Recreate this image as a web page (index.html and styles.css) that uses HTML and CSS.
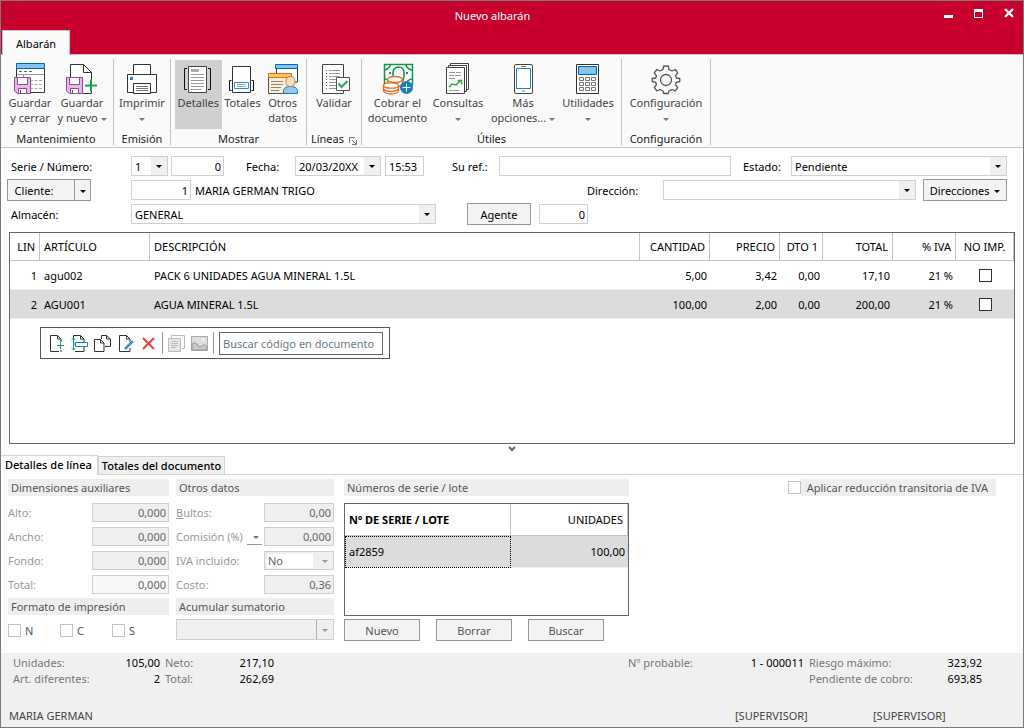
FILE: index.html
```html
<!DOCTYPE html>
<html lang="es">
<head>
<meta charset="utf-8">
<title>Nuevo albarán</title>
<link rel="stylesheet" href="styles.css">
</head>
<body>
<div class="window">
  <header class="titlebar">
    <div class="caption">
      <h1 class="caption-title">Nuevo albarán</h1>
      <div class="caption-buttons">
        <button type="button" aria-label="Minimizar"><svg width="10" height="10" viewBox="0 0 10 10"><path d="M0 7h9v3H0z" fill="#fff"/></svg></button>
        <button type="button" aria-label="Maximizar"><svg width="10" height="10" viewBox="0 0 10 10"><path d="M0 1h9v9H0zM1 4v5h7V4z" fill="#fff" fill-rule="evenodd"/></svg></button>
        <button type="button" aria-label="Cerrar"><svg width="10" height="10" viewBox="0 0 10 10"><path d="M1 1l8 8M9 1L1 9" stroke="#fff" stroke-width="2.4"/></svg></button>
      </div>
    </div>
    <button type="button" class="ribbon-tab">Albarán</button>
  </header>

  <nav class="ribbon">
    <section class="group group-save">
      <div class="group-buttons">
        <button type="button" class="tool">
          <svg width="32" height="32" viewBox="0 0 32 32" fill="none">
            <path d="M2.500 5.500V29.500H30.500V5.500" fill="#fff" stroke="#333"/>
            <path d="M2.500.500h28v5h-28z" fill="#83c3ef" stroke="#0067b0"/>
            <path d="M5 8.500h3m2 0h3m2 0h3" stroke="#666"/>
            <path d="M3 11.500h27M9.500 12v4" stroke="#999"/>
            <path d="M16 17.500h12M16 21.500h12M16 25.500h12" stroke="#aaa" stroke-dasharray="3 1.500"/>
            <path d="M.500 14.500h16v16H3.500L.500 28z" fill="#e2b9df" stroke="#95479b"/>
            <path d="M3.500 14.500h10v7h-10z" fill="#fff" stroke="#95479b"/>
            <path d="M4.500 25.500h8v5h-8z" fill="#fff" stroke="#95479b"/><path d="M6.500 27v3" stroke="#555"/>
          </svg>
          <span>Guardar<br>y cerrar</span>
        </button>
        <button type="button" class="tool">
          <svg width="32" height="32" viewBox="0 0 32 32" fill="none">
            <path d="M4.500 14V1.500H17.500L25.500 9.500V18M17 30.500h8.500V28" fill="#fff" stroke="#333"/>
            <path d="M17.500 1.500v8h8" stroke="#333"/>
            <path d="M19 22.500h12M25 16.500v12" stroke="#11a94e" stroke-width="2"/>
            <path d="M.500 14.500h16v16H3.500L.500 28z" fill="#e2b9df" stroke="#95479b"/>
            <path d="M3.500 14.500h10v7h-10z" fill="#fff" stroke="#95479b"/>
            <path d="M4.500 25.500h8v5h-8z" fill="#fff" stroke="#95479b"/><path d="M6.500 27v3" stroke="#555"/>
          </svg>
          <span>Guardar<br>y nuevo <i class="arrow"></i></span>
        </button>
      </div>
      <h2>Mantenimiento</h2>
    </section>
    <section class="group group-print">
      <div class="group-buttons">
        <button type="button" class="tool">
          <svg width="32" height="32" viewBox="0 0 32 32" fill="none" stroke="#333">
            <path d="M7.500 1.500h17v10h-17z" fill="#fff"/>
            <path d="M1.500 11.500h29v19h-29z" fill="#fff" stroke="none"/>
            <path d="M7 29.500H1.500V11.500h29v18H25" fill="#fff"/>
            <path d="M7.500 20.500h17v10h-17z" fill="#fff"/>
            <path d="M4 14h3v3H4z" fill="#1e86d0" stroke="none"/>
            <path d="M10 23.500h12M10 25.500h12M10 27.500h12" stroke="#777"/>
          </svg>
          <span>Imprimir<br><i class="arrow"></i></span>
        </button>
      </div>
      <h2>Emisión</h2>
    </section>
    <section class="group group-show">
      <div class="group-buttons">
        <button type="button" class="tool tool-details" aria-pressed="true">
          <svg width="32" height="32" viewBox="0 0 32 32" fill="none">
            <path d="M6.500 3.500h18v26h-18z" fill="#fff" stroke="#444"/>
            <path d="M9 6h8v3H9z" fill="#aaa"/>
            <path d="M9 11.500h13M9 14.500h13M9 17.500h13M9 20.500h13M9 23.500h13M9 26.500h10" stroke="#999"/>
            <path d="M5 5.500H2.500v21H5M26 5.500h2.500v21H26" stroke="#111"/>
          </svg>
          <span>Detalles</span>
        </button>
        <button type="button" class="tool tool-totals">
          <svg width="32" height="32" viewBox="0 0 32 32" fill="none">
            <path d="M6.500 3.500h18v26h-18z" fill="#fff" stroke="#333"/>
            <path d="M8.500 19.500h14v6h-14z" fill="#fff" stroke="#0f98d6"/>
            <path d="M11 21.500h9M11 23.500h9" stroke="#aaa"/>
            <path d="M5.500 17.500H3.500v10h2M25.500 17.500h2v10h-2" stroke="#111"/>
          </svg>
          <span>Totales</span>
        </button>
        <button type="button" class="tool tool-other">
          <svg width="32" height="32" viewBox="0 0 32 32" fill="none">
            <path d="M9.500 5v14h21V5" fill="#fff" stroke="#333"/>
            <path d="M8.500 1.500h22v4h-22z" fill="#83c3ef" stroke="#0067b0"/>
            <path d="M1.500 13h22v17.500h-22z" fill="#fbeed8" stroke="#555"/>
            <path d="M1.500 10.500h23v4h-23z" fill="#ffc65a" stroke="#e26d22"/>
            <path d="M4 18.500h12M4 21.500h12M4 24.500h10M4 27.500h8" stroke="#888"/>
            <path d="M16.500 30.500v-3q1-4 7-4t7 4v3z" fill="#94caec" stroke="#1677bd"/>
            <path d="M23.500 13.500q4.500 0 4.500 5t-4.500 5-4.500-5 4.500-5z" fill="#f7dfc8" stroke="#c97e4b"/>
          </svg>
          <span>Otros<br>datos</span>
        </button>
      </div>
      <h2>Mostrar</h2>
    </section>
    <section class="group group-lines">
      <div class="group-buttons">
        <button type="button" class="tool">
          <svg width="32" height="32" viewBox="0 0 32 32" fill="none">
            <path d="M4.500 1.500h21v29h-21z" fill="#fff" stroke="#444"/>
            <path d="M11 7.500h11M11 10.500h11M11 13.500h11M11 16.500h8M11 19.500h8M11 22.500h7M11 25.500h7" stroke="#999"/>
            <path d="M8.500 7v1m0 5v1m0 8v1m0 2v1" stroke="#15a349"/>
            <path d="M8.500 10v1m0 5v1m0 2v1" stroke="#c8002d"/>
            <path d="M18.500 14.500h13v13h-13z" fill="#fff" stroke="#555"/>
            <path d="M20.500 20.500l3 3.500 6-6" stroke="#23a551" stroke-width="2"/>
          </svg>
          <span>Validar</span>
        </button>
      </div>
      <h2>Líneas<button type="button" class="launcher" aria-label="Opciones de líneas"><svg width="8" height="8" viewBox="0 0 8 8" fill="none" stroke="#777"><path d="M.500 6V.500H6M3 3l4 4M7.500 3v4.500H3"/></svg></button></h2>
    </section>
    <section class="group group-useful">
      <div class="group-buttons">
        <button type="button" class="tool tool-charge">
          <svg width="32" height="32" viewBox="0 0 32 32" fill="none">
            <path d="M2.500 1.500h28v20h-28z" fill="#fff" stroke="#119447" stroke-width="1.500"/>
            <path d="M2.500 7q5-1 6-5M24 2q1 4 6 5M24 21q1-4 6-5M2.500 16q4 0 5 3" stroke="#119447" stroke-width="1.500"/>
            <path d="M12 18q0-3-1-5-1-9 5.500-9t5.500 9l-1 5" stroke="#119447" stroke-width="1.500"/>
            <path d="M7 9h2v2H7zm17 0h2v2h-2z" fill="#119447"/>
            <path d="M5.500 16v4q2 4 8 4t7-4v-4" fill="#fff8ef" stroke="#e26d22" stroke-width="1.300"/>
            <ellipse cx="13" cy="16.500" rx="7.500" ry="3" fill="#fff" stroke="#e26d22" stroke-width="1.300"/>
            <path d="M1.500 22v6q2 3 7.500 3t7.500-3v-6" fill="#fff" stroke="#e26d22" stroke-width="1.300"/>
            <ellipse cx="9" cy="22.500" rx="7.500" ry="2.700" fill="#fff" stroke="#e26d22" stroke-width="1.300"/>
            <path d="M1.500 26q2 2.500 7.500 2.500t7.500-2.500" stroke="#e26d22" stroke-width="1.300"/>
            <circle cx="24.500" cy="24.500" r="6.500" fill="#147fc3"/><path d="M20.500 24.500h8M24.500 20.500v8" stroke="#fff"/>
          </svg>
          <span>Cobrar el<br>documento</span>
        </button>
        <button type="button" class="tool tool-query">
          <svg width="32" height="32" viewBox="0 0 32 32" fill="none">
            <path d="M8.500.500h18v26h-18z" fill="#fff" stroke="#444"/>
            <path d="M6.500 2.500h18v26h-18z" fill="#fff" stroke="#444"/>
            <path d="M4.500 4.500h18v26h-18z" fill="#fff" stroke="#444"/>
            <path d="M7 9.500h6m1 0h5M7 12.500h5m1 0h6M7 15.500h6M7 27.500h10" stroke="#999"/>
            <path d="M7 24l3-3 4 1 5-5M15.500 17.500h4v4" stroke="#35a52d" stroke-width="1.500"/>
          </svg>
          <span>Consultas<br><i class="arrow"></i></span>
        </button>
        <button type="button" class="tool tool-more">
          <svg width="32" height="32" viewBox="0 0 32 32" fill="none">
            <rect x="7.500" y="1.500" width="18" height="29" rx="1.500" fill="#fff" stroke="#444"/>
            <path d="M9.500 5.500h14v20h-14z" fill="#fff" stroke="#1c83c6"/>
            <path d="M14 3.500h5M15 28h3" stroke="#777"/>
          </svg>
          <span>Más<br>opciones... <i class="arrow"></i></span>
        </button>
        <button type="button" class="tool tool-utils">
          <svg width="32" height="32" viewBox="0 0 32 32" fill="none">
            <path d="M4.500 1.500h22v29h-22z" fill="#fff" stroke="#333"/>
            <path d="M6.500 3.500h18v8h-18z" fill="#83c3ef" stroke="#0067b0"/>
            <path d="M7.500 14.500h4v3h-4zm6 0h4v3h-4zm6 0h4v3h-4zM7.500 19.500h4v3h-4zm6 0h4v3h-4zm6 0h4v3h-4zM7.500 24.500h4v3h-4zm6 0h4v3h-4zm6 0h4v3h-4z" stroke="#777"/>
          </svg>
          <span>Utilidades<br><i class="arrow"></i></span>
        </button>
      </div>
      <h2>Útiles</h2>
    </section>
    <section class="group group-config">
      <div class="group-buttons">
        <button type="button" class="tool">
          <svg width="32" height="32" viewBox="0 0 32 32" fill="none" stroke="#555" stroke-width="1.300" stroke-linejoin="round">
            <path d="M13 6.500l.8-3.500h4.400l.8 3.500 3 1.500 3.200-1.500 2.500 3.300-2.200 3 .8 2.200 3.500.5v3l-3.500.8-.8 2.400 2.200 3-2.500 3.200-3.200-1.400-3 1.500-.8 2.500h-4.400l-.8-2.500-3-1.500-3.200 1.400-2.500-3.200 2.200-3-.8-2.400-3.500-.8v-3l3.500-.5.8-2.200-2.200-3L6.800 6.500 10 8z"/>
            <circle cx="16" cy="17" r="5.500"/>
          </svg>
          <span>Configuración<br><i class="arrow"></i></span>
        </button>
      </div>
      <h2>Configuración</h2>
    </section>
  </nav>

  <main class="content">
    <form class="head-form">
      <div class="form-row">
        <label class="lead" for="serie">Serie / Número:</label>
        <span class="combo w-serie"><select id="serie"><option>1</option></select></span>
        <input class="num w-number" type="text" value="0" aria-label="Número">
        <label class="w-date-label" for="fecha">Fecha:</label>
        <span class="combo w-date"><select id="fecha"><option>20/03/20XX</option></select></span>
        <input class="w-time" type="text" value="15:53" aria-label="Hora">
        <label class="w-ref-label" for="ref">Su ref.:</label>
        <input class="grow" id="ref" type="text">
        <label class="w-state-label" for="estado">Estado:</label>
        <span class="combo w-state"><select id="estado"><option>Pendiente</option></select></span>
      </div>
      <div class="form-row">
        <div class="lead">
          <span class="split"><button type="button" class="btn">Cliente:</button><button type="button" class="btn" aria-label="Más opciones de cliente"><i class="arrow dark"></i></button></span>
        </div>
        <input class="num w-client" type="text" value="1" aria-label="Código de cliente">
        <span class="client-name">MARIA GERMAN TRIGO</span>
        <label class="w-address-label" for="direccion">Dirección:</label>
        <span class="combo w-address"><select id="direccion"><option></option></select></span>
        <button type="button" class="btn w-addresses">Direcciones <i class="arrow dark"></i></button>
      </div>
      <div class="form-row">
        <label class="lead" for="almacen">Almacén:</label>
        <span class="combo w-store"><select id="almacen"><option>GENERAL</option></select></span>
        <button type="button" class="btn w-agent">Agente</button>
        <input class="num w-agent-code" type="text" value="0" aria-label="Código de agente">
      </div>
    </form>

    <section class="lines">
      <table class="grid">
        <colgroup><col class="c-lin"><col class="c-art"><col><col class="c-num"><col class="c-num"><col class="c-dto"><col class="c-num"><col class="c-iva"><col class="c-imp"></colgroup>
        <thead><tr><th class="r">LIN</th><th>ARTÍCULO</th><th>DESCRIPCIÓN</th><th class="r">CANTIDAD</th><th class="r">PRECIO</th><th class="r">DTO 1</th><th class="r">TOTAL</th><th class="r">% IVA</th><th class="c">NO IMP.</th></tr></thead>
        <tbody>
          <tr><td class="r">1</td><td>agu002</td><td>PACK 6 UNIDADES AGUA MINERAL 1.5L</td><td class="r">5,00</td><td class="r">3,42</td><td class="r">0,00</td><td class="r">17,10</td><td class="r">21 %</td><td class="c"><input type="checkbox" aria-label="No imprimir línea 1"></td></tr>
          <tr class="selected"><td class="r">2</td><td>AGU001</td><td>AGUA MINERAL 1.5L</td><td class="r">100,00</td><td class="r">2,00</td><td class="r">0,00</td><td class="r">200,00</td><td class="r">21 %</td><td class="c"><input type="checkbox" aria-label="No imprimir línea 2"></td></tr>
        </tbody>
      </table>
      <div class="line-tools">
        <button type="button" aria-label="Nueva línea"><svg width="17" height="17" viewBox="0 0 17 17" fill="none"><path d="M11 16.500H2.500V.500h7l3.500 3.500v3M9.500.500V4H13M13 15v2" stroke="#333"/><path d="M9 10.500h7M12.500 7v7" stroke="#11a94e"/></svg></button>
        <button type="button" aria-label="Insertar línea"><svg width="17" height="17" viewBox="0 0 17 17" fill="none"><path d="M2.500 6V.500h7l3.500 3.500v3M9.500.500V4H13M13 12v4.500H4" stroke="#333"/><path d="M4.500 7.500h12v4h-12z" stroke="#147fc3"/><path d="M2.500 3v12M.500 5l2-2 2 2M.500 13l2 2 2-2M2 9h2" stroke="#11a94e"/></svg></button>
        <button type="button" aria-label="Duplicar línea"><svg width="17" height="17" viewBox="0 0 17 17" fill="none" stroke="#333"><path d="M7.500 4V.500h5L16.500 4v7.500H11M12.500.500V4H16"/><path d="M.500 4.500h6l3.500 3.500v8.500H.500zM6.500 4.500V8H10" fill="#fff"/></svg></button>
        <button type="button" aria-label="Modificar línea"><svg width="17" height="17" viewBox="0 0 17 17" fill="none"><path d="M9 16.500H2.500V.500h7l3.500 3.500v3M9.500.500V4H13M13 13v3.500H9" stroke="#333"/><path d="M8 14l8-8" stroke="#3b94d2" stroke-width="2.500"/></svg></button>
        <button type="button" aria-label="Eliminar línea"><svg width="17" height="17" viewBox="0 0 17 17" fill="none"><path d="M3 3l11 11M14 3L3 14" stroke="#ea3e3e" stroke-width="2"/></svg></button>
        <span class="divider"></span>
        <button type="button" aria-label="Notas" disabled><svg width="17" height="17" viewBox="0 0 17 17" fill="none" stroke="#bbb"><path d="M3.500 3V.500h13v13H14"/><path d="M.500 3.500h12v13H.500z" fill="#e8e8e8"/><path d="M3 6.500h7M3 8.500h7M3 10.500h7M3 12.500h5"/></svg></button>
        <button type="button" aria-label="Imagen" disabled><svg width="17" height="17" viewBox="0 0 17 17"><path d="M.500 1.500h16v14H.500z" fill="#ddd" stroke="#aaa"/><path d="M1 9q3-3 5 0t3 3l3-2q2-1 4 2v3H1z" fill="#c8c8c8" stroke="#999"/><circle cx="12" cy="5" r="2" fill="#eee"/></svg></button>
        <span class="divider"></span>
        <input type="text" placeholder="Buscar código en documento" aria-label="Buscar código en documento">
      </div>
    </section>

    <button type="button" class="collapse" aria-label="Contraer"><svg width="8" height="6" viewBox="0 0 8 6" fill="none"><path d="M1 1l3 3 3-3" stroke="#666" stroke-width="2"/></svg></button>

    <div class="tabs" role="tablist">
      <button type="button" role="tab" aria-selected="true" class="tab active">Detalles de línea</button>
      <button type="button" role="tab" aria-selected="false" class="tab">Totales del documento</button>
    </div>

    <div class="panel">
      <div class="panel-left">
        <section>
          <h3>Dimensiones auxiliares</h3>
          <div class="fields">
            <label for="alto">Alto:</label><input class="num" id="alto" type="text" value="0,000" disabled>
            <label for="ancho">Ancho:</label><input class="num" id="ancho" type="text" value="0,000" disabled>
            <label for="fondo">Fondo:</label><input class="num" id="fondo" type="text" value="0,000" disabled>
            <label for="total">Total:</label><input class="num light" id="total" type="text" value="0,000" disabled>
          </div>
          <h3>Formato de impresión</h3>
          <div class="checks">
            <label><input type="checkbox" disabled>N</label>
            <label><input type="checkbox" disabled>C</label>
            <label><input type="checkbox" disabled>S</label>
          </div>
        </section>
        <section>
          <h3>Otros datos</h3>
          <div class="fields">
            <label for="bultos"><u>B</u>ultos:</label><input class="num" id="bultos" type="text" value="0,00" disabled>
            <div class="commission"><label for="comision">Comisión (%)</label><button type="button" disabled aria-label="Tipo de comisión"><i class="arrow"></i></button></div><input class="num" id="comision" type="text" value="0,000" disabled>
            <label for="iva">IVA incluido:</label><span class="combo off"><select id="iva" disabled><option>No</option></select></span>
            <label for="costo">Costo:</label><input class="num" id="costo" type="text" value="0,36" disabled>
          </div>
          <h3>Acumular sumatorio</h3>
          <span class="combo off sum"><select aria-label="Acumular sumatorio" disabled><option></option></select></span>
        </section>
      </div>
      <section class="serials">
        <h3>Números de serie / lote</h3>
        <div class="serial-box">
          <table class="grid">
            <colgroup><col class="c-serial"><col></colgroup>
            <thead><tr><th class="strong">Nº DE SERIE / LOTE</th><th class="r">UNIDADES</th></tr></thead>
            <tbody><tr class="selected"><td class="focused">af2859</td><td class="r">100,00</td></tr></tbody>
          </table>
        </div>
        <div class="serial-buttons">
          <button type="button" class="btn">Nuevo</button>
          <button type="button" class="btn">Borrar</button>
          <button type="button" class="btn">Buscar</button>
        </div>
      </section>
      <label class="reduction"><input type="checkbox" disabled><span>Aplicar reducción transitoria de IVA</span></label>
    </div>
  </main>

  <footer class="status">
    <div class="totals">
      <dl class="totals-left">
        <dt>Unidades:</dt><dd>105,00</dd><dt class="next">Neto:</dt><dd>217,10</dd>
        <dt>Art. diferentes:</dt><dd>2</dd><dt class="next">Total:</dt><dd>262,69</dd>
      </dl>
      <dl class="totals-right">
        <dt>Nº probable:</dt><dd>1 - 000011</dd><dt class="next">Riesgo máximo:</dt><dd>323,92</dd>
        <dt class="next third">Pendiente de cobro:</dt><dd>693,85</dd>
      </dl>
    </div>
    <div class="users"><span>MARIA GERMAN</span><span class="user-right">[SUPERVISOR]</span><span class="user-last">[SUPERVISOR]</span></div>
  </footer>
</div>
</body>
</html>
```
FILE: styles.css
```css
* { box-sizing: border-box; }
body { margin: 0; font: 11px/15px "Noto Sans", "Open Sans", sans-serif; color: #000; background: #fff; }
button, input, select { font: inherit; color: inherit; margin: 0; }
button { border: 0; padding: 0; background: none; }
h1, h2, h3, dl, dd { margin: 0; font: inherit; }
svg { display: block; flex: none; }

.window { min-height: 100vh; display: flex; flex-direction: column; border: 1px solid #7b7b7b; }

.titlebar { background: #c8002d; border-bottom: 1px solid #c4c4c4; }
.caption { height: 29px; display: flex; align-items: center; color: #fff; padding: 0 9px 0 40px; }
.caption-title { flex: 1; text-align: center; }
.caption-buttons { display: flex; gap: 20px; padding-bottom: 6px; }
.ribbon-tab { display: block; height: 25px; margin: 0 0 -1px 1px; padding: 0 13px; background: #fafafa; border: 1px solid #c4c4c4; border-bottom: 0; }

.ribbon { display: flex; background: #fafafa; border-bottom: 1px solid #c4c4c4; padding: 4px 0 2px; }
.group { display: flex; flex-direction: column; border-right: 1px solid #c4c4c4; padding: 0 4px; }
.group-buttons { display: flex; flex: 1; justify-content: center; }
.group h2 { height: 15px; margin-top: 1px; line-height: 18px; text-align: center; color: #222; white-space: nowrap; }
.tool { width: 52px; height: 69px; display: flex; flex-direction: column; align-items: center; padding-top: 3px; color: #444; white-space: nowrap; margin-top: 1px; }
.tool[aria-pressed="true"] { background: #d0d0d0; }
.tool br + .arrow { margin-left: 0; }
.group-save { width: 113px; padding: 0 5px 0 3px; }
.group-print { width: 57px; }
.group-show { width: 136px; }
.group-lines { width: 55px; padding: 0; }
.group-useful { width: 260px; }
.group-config { width: 89px; }
.tool-details { width: 47px; }
.tool-totals { width: 42px; }
.tool-other { width: 39px; }
.tool-charge { width: 63px; }
.tool-query { width: 58px; }
.tool-more { width: 72px; }
.tool-utils { width: 58px; }
.launcher { margin-left: 5px; vertical-align: -2px; }
.arrow { display: inline-block; vertical-align: middle; margin-left: 2px; border: 3px solid transparent; border-top-color: #777; border-bottom: 0; }
.arrow.dark { border-top-color: #000; }

.content { flex: 1; display: flex; flex-direction: column; }

input[type="text"], .combo { height: 20px; border: 1px solid #d0d0d0; background: #fff; padding: 0 3px; min-width: 0; }
input.num { text-align: right; padding-right: 2px; }
.combo { position: relative; display: block; padding: 0; }
.combo select { display: block; width: 100%; height: 100%; appearance: none; border: 0; background: linear-gradient(#efefef, #efefef) right / 16px 100% no-repeat; padding: 0 17px 0 3px; }
.combo::after { content: ""; position: absolute; right: 5px; top: 50%; margin-top: -1px; border: 3px solid transparent; border-top-color: #000; border-bottom: 0; pointer-events: none; }
.btn { height: 22px; background: #f3f3f3; border: 1px solid #999; }
input[type="checkbox"] { appearance: none; display: block; width: 13px; height: 13px; border: 1px solid #333; background: #fff; }
input[type="checkbox"]:disabled { border-color: #c4c4c4; }

.head-form { display: flex; flex-direction: column; gap: 2px; padding: 7px 16px 7px 10px; }
.form-row { display: flex; align-items: center; height: 22px; }
.lead { width: 120px; }
.split { display: flex; width: 84px; margin-left: -4px; }
.split .btn { flex: 1; padding-right: 14px; }
.split .btn + .btn { flex: none; width: 17px; padding: 0; margin-left: -1px; }
.split .arrow { margin-left: 0; }
.w-serie { width: 37px; margin-right: 3px; }
.w-number { width: 53px; }
.w-date-label { margin-left: 22px; width: 49px; }
.w-date { width: 86px; margin-right: 4px; }
.w-time { width: 39px; }
.w-ref-label { margin-left: 28px; width: 47px; }
.grow { flex: 1; }
.w-state-label { margin-left: 12px; width: 48px; }
.w-state { width: 216px; }
.w-client { width: 60px; margin-right: 4px; }
.client-name { flex: 1; }
.w-address-label { width: 76px; }
.w-address { width: 253px; margin-right: 7px; }
.w-addresses { width: 84px; }
.w-store { width: 305px; }
.w-agent { width: 64px; margin: 0 8px 0 31px; }
.w-agent-code { width: 49px; }

.lines { flex: 1; min-height: 208px; margin: 0 8px; border: 1px solid #666; }
.grid { width: 100%; table-layout: fixed; border-collapse: separate; border-spacing: 0; }
.grid th, .grid td { padding: 0 4px; height: 29px; text-align: left; font-weight: 400; white-space: nowrap; }
.grid td.r { padding-right: 3px; }
.grid th { height: 28px; border-right: 1px solid #c4c4c4; border-bottom: 1px solid #c4c4c4; }
.grid td { border-bottom: 1px solid #eee; }
.grid .r { text-align: right; }
.grid .c { text-align: center; }
.grid .c input { margin: 0 auto; }
.grid .strong { font-weight: 700; }
.selected { background: #dcdcdc; }
.c-lin { width: 30px; }
.c-art { width: 110px; }
.c-num { width: 70px; }
.c-dto { width: 43px; }
.c-iva { width: 63px; }
.c-imp { width: 58px; }

.line-tools { display: flex; align-items: center; gap: 6px; width: 350px; height: 32px; margin: 8px 0 0 30px; padding: 0 6px 0 7px; border: 1px solid #555; }
.line-tools .divider { width: 1px; height: 22px; background: #999; margin: 0 -1px; }
.line-tools input { flex: 1; height: 23px; border-color: #666; }
.line-tools input::placeholder { color: #6d7882; opacity: 1; }

.collapse { display: block; margin: 2px auto 3px; height: 6px; }

.tabs { display: flex; align-items: flex-end; height: 20px; border-bottom: 1px solid #d4d4d4; }
.tab { height: 18px; padding: 0 3px; border: 1px solid #d4d4d4; border-bottom: 0; background: #efefef; font-weight: 500; }
.tab.active { height: 20px; margin-bottom: -1px; padding: 0 5px 2px 4px; border-left: 0; background: #fff; }

.panel { display: flex; align-items: flex-start; padding: 4px 27px 12px 7px; color: #555; }
.panel h3 { height: 17px; line-height: 17px; padding-left: 3px; background: #eee; }
.panel-left { display: grid; grid-template-columns: 161px 158px; gap: 7px; margin-right: 10px; }
.fields { display: grid; grid-template-columns: 1fr auto; align-items: center; gap: 5px 0; padding: 7px 0 4px; color: #999; }
.fields input[type="text"], .fields .combo { width: 77px; height: 19px; background: #efefef; color: #666; }
.fields input[type="text"].light { background: #f8f8f8; }
section + section .fields input[type="text"], section + section .fields .combo { width: 70px; }
.commission { display: flex; justify-content: space-between; }
.commission button { width: 15px; margin-right: 2px; border-bottom: 1px solid #999; }
.combo.off select { background: #efefef; opacity: 1; color: #666; }
.combo.off::after { border-top-color: #999; }
.fields .combo.off select { background: linear-gradient(#fff, #fff) 2px 2px / 46px 14px no-repeat #efefef; }
.combo.sum { height: 21px; margin-top: 4px; }
.combo.sum select { border-right: 16px solid #efefef; box-shadow: inset -1px 0 #b0b0b0; padding: 0; }
.checks { display: flex; padding-top: 8px; }
.checks label { display: flex; align-items: center; gap: 4px; width: 52px; }

.serials { width: 285px; }
.serial-box { height: 113px; margin: 7px 0 3px; border: 1px solid #666; color: #000; }
.serial-box th { height: 32px; }
.serial-box td { height: 32px; }
.serial-box .c-serial { width: 166px; }
.grid .focused { outline: 1px dotted #000; outline-offset: -1px; }
.serial-buttons { display: flex; gap: 16px; }
.serial-buttons .btn { width: 76px; }
.reduction { display: flex; align-items: center; margin-left: auto; }
.reduction span { line-height: 17px; background: #eee; padding: 0 8px 0 6px; }

.status { background: #f0f0f0; padding: 2px 8px 4px; color: #444; }
.totals { display: flex; justify-content: space-between; padding: 0 33px 0 4px; margin-bottom: 21px; }
.totals dl { display: grid; line-height: 16px; }
.totals-left { grid-template-columns: 92px 55px 55px 59px; }
.totals-right { grid-template-columns: 90px 86px 84px 94px; }
.totals dt { color: #777; white-space: nowrap; }
.totals dd { text-align: right; color: #000; }
.totals .next { padding-left: 5px; }
.totals .third { grid-column: 3; }
.users { display: flex; }
.user-right { margin-left: auto; width: 138px; }
.user-last { width: 142px; }
```
